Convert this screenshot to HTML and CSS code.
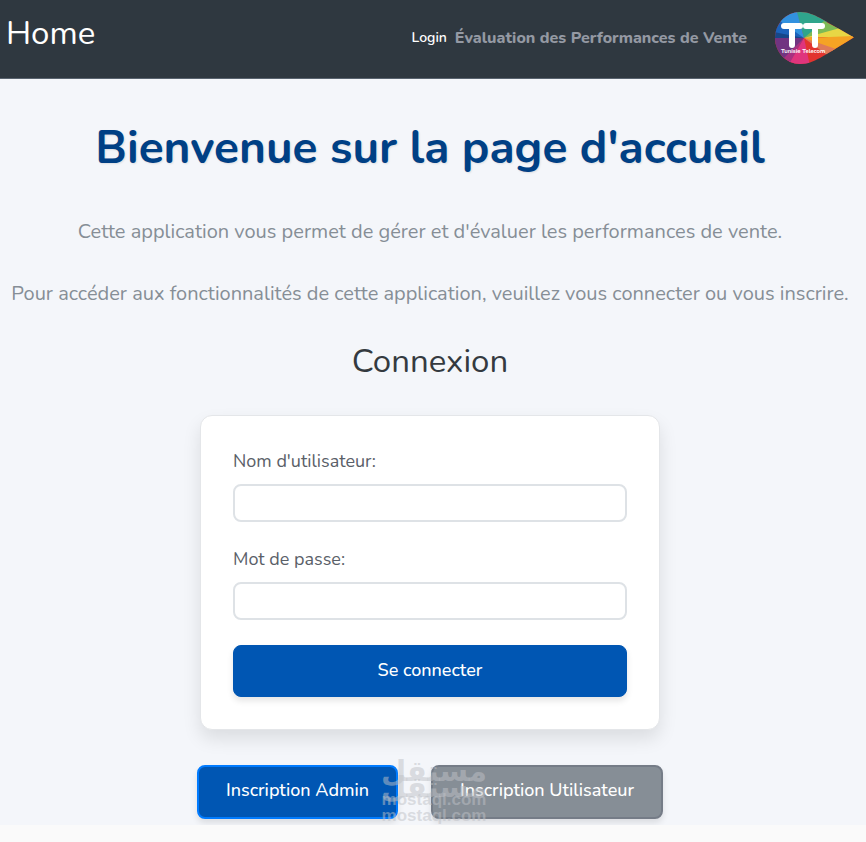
FILE: index.html
```html
<!DOCTYPE html>
<html lang="fr">
<head>
    <meta charset="UTF-8">
    <meta name="viewport" content="width=device-width, initial-scale=1.0">
    <title>Home</title>
    <link rel="stylesheet" href="styles.css">
</head>
<body>
    <div class="page">
        <nav class="navbar">
            <a class="brand" href="#">Home</a>
            <div class="nav-right">
                <a class="nav-link" href="#">Login</a>
                <span class="nav-title">Évaluation des Performances de Vente</span>
                <svg class="logo" viewBox="0 0 80 52" role="img" aria-label="Tunisie Telecom">
                    <defs>
                        <clipPath id="drop">
                            <path d="M26 0C34 0 40 3 46 6L80 25.500L46 46C40 49 34 52 26 52C12 52 1 40 1 26S12 0 26 0Z"/>
                        </clipPath>
                    </defs>
                    <g clip-path="url(#drop)">
                        <rect width="80" height="52" fill="#e2342f"/>
                        <path d="M30 26L22 -2H62L52 12Z" fill="#2fa58c"/>
                        <path d="M30 26L50 9L64 16L68 19Z" fill="#7dba55"/>
                        <path d="M30 26L66 16L82 25L50 25Z" fill="#e8d745"/>
                        <path d="M30 26L82 24L58 40Z" fill="#f5a324"/>
                        <path d="M30 26L62 37L53 43Z" fill="#df7b58"/>
                        <path d="M30 26L36 54H12Z" fill="#df357d"/>
                        <path d="M30 26L14 54L6 44L13 38Z" fill="#a83180"/>
                        <path d="M30 26L10 46L-2 38V25Z" fill="#713481"/>
                        <path d="M30 26H-2L2 14Z" fill="#174789"/>
                        <path d="M30 26L0 20L9 5Z" fill="#1c62ba"/>
                        <path d="M30 26L6 9L12 0H23Z" fill="#3291df"/>
                    </g>
                    <path d="M10 14H26M18 14V33M32 14H48M41 14V33" fill="none" stroke="#fff" stroke-width="6" stroke-linecap="round"/>
                    <text x="7" y="41" class="logo-text">Tunisie Telecom</text>
                </svg>
            </div>
        </nav>

        <main class="content">
            <h1>Bienvenue sur la page d'accueil</h1>
            <p>Cette application vous permet de gérer et d'évaluer les performances de vente.</p>
            <p>Pour accéder aux fonctionnalités de cette application, veuillez vous connecter ou vous inscrire.</p>

            <h2>Connexion</h2>
            <form class="login-card">
                <label for="username">Nom d'utilisateur:</label>
                <input type="text" id="username" name="username">
                <label for="password">Mot de passe:</label>
                <input type="password" id="password" name="password">
                <button type="submit" class="btn btn-login">Se connecter</button>
            </form>

            <div class="register">
                <button type="button" class="btn btn-admin">Inscription Admin</button>
                <button type="button" class="btn btn-user">Inscription Utilisateur</button>
                <div class="watermark" aria-hidden="true">
                    <div class="mark mark-back"><span lang="ar">مستقل</span><span>mostaql.com</span></div>
                    <div class="mark"><span lang="ar">مستقل</span><span>mostaql.com</span></div>
                </div>
            </div>
        </main>
    </div>
</body>
</html>
```
FILE: styles.css
```css
* {
    box-sizing: border-box;
}

body {
    margin: 0;
    background: #fafafa;
    color: #343a40;
    font-family: Nunito, Lato, sans-serif;
    font-size: 20px;
}

.page {
    background: #f4f6fa;
}

.navbar {
    display: flex;
    align-items: center;
    justify-content: space-between;
    height: 79px;
    padding: 0 12px 3px 6px;
    background: #2f3840;
    border-bottom: 1px solid #59636f;
}

.brand {
    color: #fff;
    font-size: 33px;
    line-height: 44px;
    text-decoration: none;
    padding-bottom: 8px;
}

.nav-right {
    display: flex;
    align-items: center;
}

.nav-link {
    margin-right: 8px;
    color: #fff;
    font-size: 14px;
    font-weight: 600;
    text-decoration: none;
}

.nav-title {
    margin-right: 27px;
    color: #9499a3;
    font-size: 16px;
    font-weight: 800;
}

.logo {
    width: 80px;
    height: 52px;
}

.logo-text {
    fill: #fff;
    font-size: 6px;
    font-weight: 700;
}

.content {
    display: flex;
    flex-direction: column;
    align-items: center;
    padding: 37px 6px 6px 0;
    text-align: center;
}

h1 {
    margin: 0 0 36px;
    color: #004085;
    font-size: 46px;
    font-weight: 700;
    line-height: 64px;
    text-shadow: 1px 1px 2px rgba(0, 0, 0, 0.1);
}

p {
    margin: 0 0 30px;
    color: #868e96;
    line-height: 32px;
}

h2 {
    margin: 0 0 31px;
    font-size: 33px;
    font-weight: 400;
    line-height: 44px;
}

.login-card {
    display: flex;
    flex-direction: column;
    width: 100%;
    max-width: 460px;
    padding: 32px;
    background: #fff;
    border: 1px solid #e4e6e9;
    border-radius: 12px;
    box-shadow: 0 9px 18px rgba(0, 0, 0, 0.1);
    text-align: left;
}

label {
    margin-bottom: 10px;
    color: #5a6068;
    font-size: 18px;
    line-height: 26px;
}

input {
    height: 38px;
    margin-bottom: 24px;
    padding: 0 12px;
    background: #fff;
    border: 2px solid #dee2e6;
    border-radius: 8px;
    font: inherit;
}

.btn {
    border: 1px solid #0056b3;
    border-radius: 8px;
    background: #0056b3;
    box-shadow: 0 4px 6px rgba(0, 0, 0, 0.1);
    color: #fff;
    font-family: inherit;
    font-size: 18px;
    font-weight: 500;
    cursor: pointer;
}

.btn-login {
    height: 52px;
    margin-top: 1px;
    padding-bottom: 4px;
}

.register {
    position: relative;
    display: flex;
    gap: 33px;
    margin-top: 35px;
}

.register .btn {
    height: 54px;
    padding: 0 27px 4px;
    border-width: 2px;
}

.btn-admin {
    border-color: #007bff;
}

.register .btn-user {
    background: #868e96;
    border-color: #757c87;
}

.watermark {
    position: absolute;
    top: 2px;
    left: 184px;
    color: rgba(190, 193, 198, 0.5);
    pointer-events: none;
}

.mark {
    display: flex;
    flex-direction: column;
    align-items: center;
    font-family: "Liberation Sans", sans-serif;
    font-size: 17px;
    font-weight: 700;
    line-height: 18px;
}

.mark [lang="ar"] {
    font-family: "DejaVu Sans", sans-serif;
    font-size: 29px;
    line-height: 40px;
}

.mark-back {
    position: absolute;
    top: -16px;
}
```
